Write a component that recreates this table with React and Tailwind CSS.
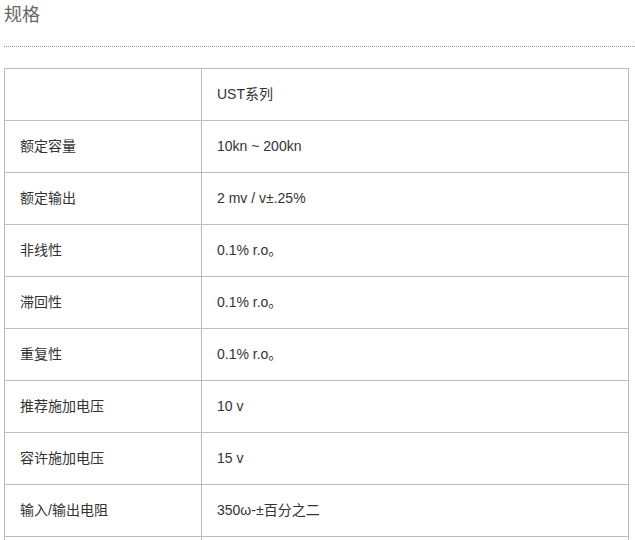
import React from 'react';

const rows = [
    ['', 'UST系列'],
    ['额定容量', '10kn ~ 200kn'],
    ['额定输出', '2 mv / v±.25%'],
    ['非线性', '0.1% r.o。'],
    ['滞回性', '0.1% r.o。'],
    ['重复性', '0.1% r.o。'],
    ['推荐施加电压', '10 v'],
    ['容许施加电压', '15 v'],
    ['输入/输出电阻', '350ω-±百分之二'],
    ['', ''],
];

export default function App() {
    return (
        <div
            className="bg-white h-[540px] overflow-hidden pl-[4px] pt-[3px]"
            style={{ fontFamily: '"Liberation Sans", Arial, "Noto Sans CJK SC", sans-serif' }}
        >
            {/* Heading */}
            <h2 className="text-[18px] leading-[24px] text-[#666] font-normal">规格</h2>
            <div className="mt-[19px] border-t border-dotted border-[#999]" />

            {/* Spec table */}
            <div className="mt-[21px] w-[625px] border-t border-x border-[#bdbdbd] text-[14px] text-[#333]">
                {rows.map(([label, value], i) => (
                    <div key={i} className="flex h-[52px] border-b border-[#bdbdbd]">
                        <div className="w-[197px] shrink-0 flex items-center border-r border-[#bdbdbd] px-[15px]">{label}</div>
                        <div className="flex-1 flex items-center px-[15px]">{value}</div>
                    </div>
                ))}
            </div>
        </div>
    );
}
